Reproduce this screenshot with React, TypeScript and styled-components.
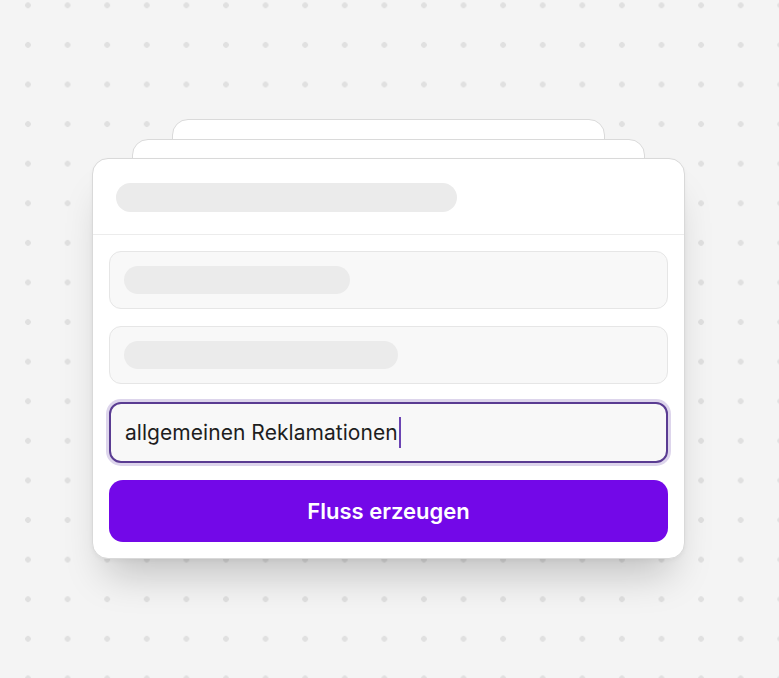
import React, { FunctionComponent } from "react";

import styled, { createGlobalStyle } from "styled-components";

const GlobalStyle = createGlobalStyle`
  html, body {
    margin: 0;
    padding: 0;
  }

  body {
    font-family: Inter, "Noto Sans", sans-serif;
    background-color: #f4f4f4;
    background-image: radial-gradient(circle, #e0e0e0 2.6px, transparent 3.1px);
    background-size: 39.6px 39.6px;
    background-position: 8.2px -14.5px;
  }
`;

const StyledPage = styled.div`
  width: 779px;
  height: 678px;
  box-sizing: border-box;
  padding: 119px 0 0 92px;
`;

const StyledStack = styled.div`
  position: relative;
  width: 593px;
  padding-top: 39px;
`;

const StyledBackCard = styled.div<{ $inset: number; $top: number }>`
  position: absolute;
  top: ${(p) => p.$top}px;
  left: ${(p) => p.$inset}px;
  right: ${(p) => p.$inset}px;
  height: 120px;
  box-sizing: border-box;
  background: #ffffff;
  border: 1px solid #dadada;
  border-radius: 16px;
`;

const StyledCard = styled.div`
  position: relative;
  background: #ffffff;
  border: 1px solid #d9d9d9;
  border-radius: 16px;
  box-shadow: 0 28px 40px -14px rgba(0, 0, 0, 0.22), 0 2px 4px rgba(0, 0, 0, 0.04);
`;

const StyledHeader = styled.div`
  height: 76px;
  box-sizing: border-box;
  padding: 24px 0 0 23px;
  border-bottom: 1px solid #ececec;
`;

const StyledSkeleton = styled.div<{ $width: number; $height: number }>`
  width: ${(p) => p.$width}px;
  height: ${(p) => p.$height}px;
  border-radius: 999px;
  background: #ebebeb;
`;

const StyledBody = styled.div`
  display: flex;
  flex-direction: column;
  gap: 17px;
  padding: 16px;
`;

const StyledField = styled.div`
  height: 58px;
  box-sizing: border-box;
  display: flex;
  align-items: center;
  padding: 0 14px;
  background: #f8f8f8;
  border: 1px solid #e6e6e6;
  border-radius: 12px;
`;

const StyledActiveField = styled(StyledField)`
  height: 61px;
  margin-top: 1px;
  border: 2px solid #5a3c92;
  box-shadow: 0 0 0 3px #ddd5ec;
  font-size: 21px;
  color: #1e1e1e;
  letter-spacing: 0.05px;
`;

const StyledCaret = styled.span`
  display: inline-block;
  width: 2px;
  height: 31px;
  margin-left: 1px;
  background: #6b44b3;
`;

const StyledButton = styled.button`
  height: 62px;
  border: none;
  border-radius: 14px;
  background: #7308e8;
  color: #ffffff;
  font-family: Inter, "Noto Sans", sans-serif;
  font-size: 22px;
  font-weight: 600;
  letter-spacing: 0;
  cursor: pointer;
`;

const App: FunctionComponent = () => {
  return (
    <StyledPage>
      <GlobalStyle />
      <StyledStack>
        <StyledBackCard $inset={80} $top={0} />
        <StyledBackCard $inset={40} $top={20} />
        <StyledCard>
          <StyledHeader>
            <StyledSkeleton $width={341} $height={29} />
          </StyledHeader>
          <StyledBody>
            <StyledField>
              <StyledSkeleton $width={226} $height={28} />
            </StyledField>
            <StyledField>
              <StyledSkeleton $width={274} $height={28} />
            </StyledField>
            <StyledActiveField>
              allgemeinen Reklamationen
              <StyledCaret />
            </StyledActiveField>
            <StyledButton>Fluss erzeugen</StyledButton>
          </StyledBody>
        </StyledCard>
      </StyledStack>
    </StyledPage>
  );
};

export default App;
